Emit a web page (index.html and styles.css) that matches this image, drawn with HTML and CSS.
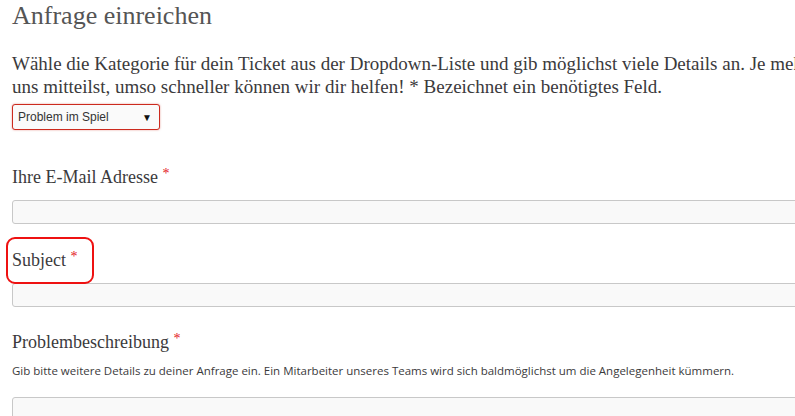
FILE: index.html
```html
<!DOCTYPE html>
<html lang="de">
<head>
  <meta charset="UTF-8" />
  <title>Anfrage einreichen</title>
  <link rel="stylesheet" href="styles.css">
</head>
<body>
  <div class="page">
    <h1>Anfrage einreichen</h1>

    <p class="intro">Wähle die Kategorie für dein Ticket aus der Dropdown-Liste und gib möglichst viele Details an. Je mehr Informationen du<br>uns mitteilst, umso schneller können wir dir helfen! * Bezeichnet ein benötigtes Feld.</p>

    <div class="select">
      <span>Problem im Spiel</span>
      <span class="arrow">▼</span>
    </div>

    <div class="field email">
      <label>Ihre E-Mail Adresse <span class="req">*</span></label>
      <div class="input"></div>
    </div>

    <div class="field subject">
      <label class="marked">Subject <span class="req">*</span></label>
      <div class="input"></div>
    </div>

    <div class="field problem">
      <label>Problembeschreibung <span class="req">*</span></label>
      <p class="hint">Gib bitte weitere Details zu deiner Anfrage ein. Ein Mitarbeiter unseres Teams wird sich baldmöglichst um die Angelegenheit kümmern.</p>
      <div class="input textarea"></div>
    </div>
  </div>
</body>
</html>
```

FILE: styles.css
```css
* {
  box-sizing: border-box;
}

html, body {
  margin: 0;
  overflow: hidden;
  background: #fff;
}

.page {
  width: 1100px;
  padding: 0 0 0 12px;
  font-family: 'Liberation Serif', serif;
  color: #3b3a3c;
}

h1 {
  margin: 0;
  padding-top: 1px;
  font-size: 26px;
  font-weight: normal;
  line-height: 30px;
  color: #555;
}

.intro {
  margin: 21px 0 0;
  font-size: 19px;
  line-height: 23px;
}

.select {
  margin-top: 6px;
  width: 148px;
  height: 26px;
  border: 1px solid #cc2a1e;
  border-radius: 3px;
  box-shadow: 0 0 2px rgba(204, 42, 30, 0.5);
  background: #fafafa;
  display: flex;
  align-items: center;
  justify-content: space-between;
  padding: 0 7px 0 5px;
  font-family: 'Liberation Sans', sans-serif;
  font-size: 12px;
  color: #333;
}

.select .arrow {
  font-size: 10px;
  color: #111;
}

.field.email {
  margin-top: 36px;
}

.field.subject {
  margin-top: 25px;
}

.field.problem {
  margin-top: 24px;
}

label {
  display: inline-block;
  font-size: 18px;
  line-height: 22px;
}

.req {
  color: #e3141c;
  font-size: 14px;
  vertical-align: top;
  position: relative;
  top: -3px;
}

.marked {
  position: relative;
}

.marked::after {
  content: "";
  position: absolute;
  left: -6px;
  top: -12px;
  width: 84px;
  height: 43px;
  border: 2px solid #ee1111;
  border-radius: 9px;
}

.input {
  margin-top: 12px;
  height: 24px;
  border: 1px solid #c8c8c8;
  border-radius: 3px;
  background: #f9f9f9;
}

.hint {
  margin: 10px 0 0;
  font-family: 'Open Sans', sans-serif;
  font-size: 11.5px;
  line-height: 16px;
  color: #3b3a3c;
}

.textarea {
  margin-top: 18px;
  height: 80px;
}
```
